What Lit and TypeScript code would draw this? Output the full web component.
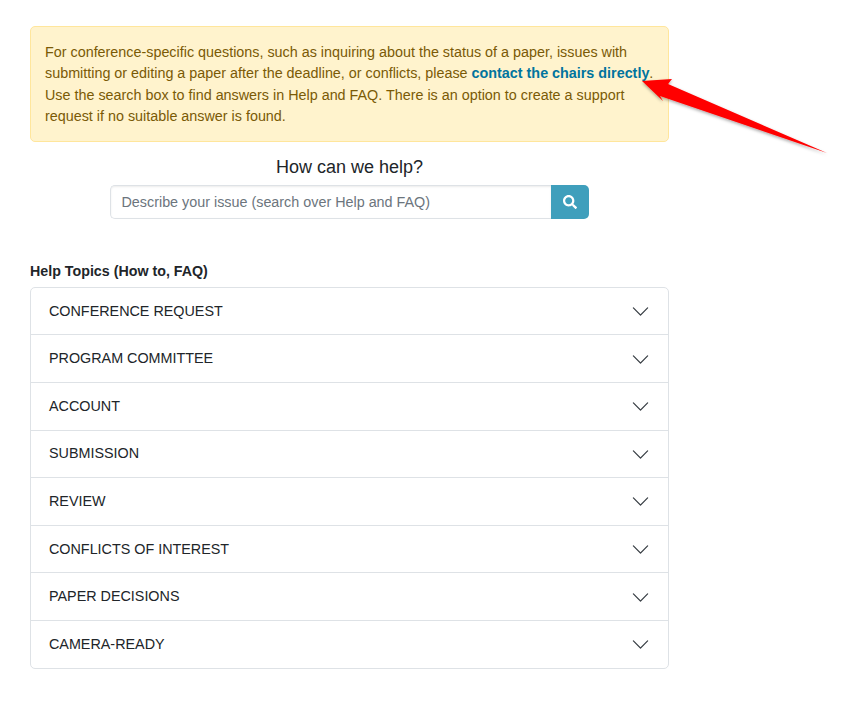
import { LitElement, html, css, svg } from "lit";
import { customElement } from "lit/decorators.js";

const TOPICS = [
  "CONFERENCE REQUEST",
  "PROGRAM COMMITTEE",
  "ACCOUNT",
  "SUBMISSION",
  "REVIEW",
  "CONFLICTS OF INTEREST",
  "PAPER DECISIONS",
  "CAMERA-READY",
];

@customElement("app-root")
export class AppRoot extends LitElement {
  static styles = css`
    :host {
      display: block;
      position: relative;
      height: 722px;
      background: #fff;
      font-family: "Liberation Sans", Arial, sans-serif;
      font-size: 14.35px;
      line-height: 21.6px;
      color: #212529;
      overflow: hidden;
    }
    .page {
      width: 639px;
      margin-left: 30px;
      padding-top: 26px;
      display: flex;
      flex-direction: column;
    }
    .alert {
      background: #fff3cd;
      border: 1px solid #ffe69c;
      border-radius: 5px;
      color: #7a5a06;
      padding: 14.6px 10px 13.4px 14px;
    }
    .alert a {
      color: #00749e;
      font-weight: 700;
      text-decoration: none;
    }
    h2 {
      margin: 13px 0 0;
      font-size: 18px;
      line-height: 24px;
      font-weight: 400;
      text-align: center;
      color: #212529;
    }
    .search {
      display: flex;
      width: 479px;
      height: 34px;
      margin: 6px 0 0 80px;
    }
    .search input {
      flex: 1;
      min-width: 0;
      box-sizing: border-box;
      border: 1px solid #dee2e6;
      border-right: none;
      border-radius: 5px 0 0 5px;
      padding: 0 10.5px;
      font: inherit;
      color: #212529;
      outline: none;
      box-shadow: inset 0 1px 2px rgba(0, 0, 0, 0.075);
    }
    .search input::placeholder {
      color: #6c757d;
      opacity: 1;
    }
    .search button {
      width: 38px;
      border: none;
      padding: 0;
      background: #3f9fbc;
      border-radius: 0 5px 5px 0;
      display: flex;
      align-items: center;
      justify-content: center;
    }
    .label {
      margin-top: 42px;
      font-weight: 700;
      font-size: 14.25px;
      line-height: 20px;
      color: #212529;
    }
    .accordion {
      margin-top: 6px;
      border: 1px solid #dee2e6;
      border-radius: 5px;
    }
    .row {
      height: 46.1px;
      box-sizing: border-box;
      display: flex;
      align-items: center;
      justify-content: space-between;
      padding: 0 18px 0 18px;
    }
    .row + .row {
      height: 47.6px;
      padding-top: 0.6px;
      border-top: 1px solid #dee2e6;
    }
    .row svg {
      display: block;
      width: 19px;
      height: 19px;
    }
    .overlay {
      position: absolute;
      left: 0;
      top: 0;
      pointer-events: none;
    }
  `;

  render() {
    return html`
      <div class="page">
        <div class="alert">
          For conference-specific questions, such as inquiring about the status of a paper, issues with
          submitting or editing a paper after the deadline, or conflicts, please
          <a href="#">contact the chairs directly</a>. Use the search box to find answers in Help and FAQ.
          There is an option to create a support request if no suitable answer is found.
        </div>
        <h2>How can we help?</h2>
        <div class="search">
          <input placeholder="Describe your issue (search over Help and FAQ)" />
          <button aria-label="Search">
            <svg width="14" height="14" viewBox="0 0 512 512">
              <path
                fill="#fff"
                d="M505 442.700L405.300 343c-4.500-4.500-10.600-7-17-7H372c27.600-35.300 44-79.700 44-128C416 93.100 322.900 0 208 0S0 93.100 0 208s93.100 208 208 208c48.300 0 92.700-16.400 128-44v16.300c0 6.400 2.500 12.500 7 17l99.700 99.700c9.400 9.400 24.600 9.400 33.900 0l28.300-28.300c9.400-9.400 9.400-24.600.1-34zM208 336c-70.700 0-128-57.200-128-128 0-70.700 57.200-128 128-128 70.700 0 128 57.200 128 128 0 70.700-57.200 128-128 128z"
              />
            </svg>
          </button>
        </div>
        <div class="label">Help Topics (How to, FAQ)</div>
        <div class="accordion">
          ${TOPICS.map(
            (t) => html`
              <div class="row">
                <span>${t}</span>
                <svg viewBox="0 0 16 16">
                  <path
                    fill="#343a40"
                    fill-rule="evenodd"
                    d="M1.646 4.646a.5.5 0 0 1 .708 0L8 10.293l5.646-5.647a.5.5 0 0 1 .708.708l-6 6a.5.5 0 0 1-.708 0l-6-6a.5.5 0 0 1 0-.708z"
                  />
                </svg>
              </div>
            `
          )}
        </div>
      </div>
      <svg class="overlay" width="861" height="722" viewBox="0 0 861 722">
        <defs>
          <filter id="sh" x="-20%" y="-20%" width="140%" height="140%">
            <feDropShadow dx="0" dy="1.500" stdDeviation="1.500" flood-color="#000" flood-opacity="0.35" />
          </filter>
        </defs>
        ${svg`<polygon filter="url(#sh)" fill="#ff0000" points="642,81 672,79 668,84 827,153 660,96 663,101" />`}
      </svg>
    `;
  }
}
